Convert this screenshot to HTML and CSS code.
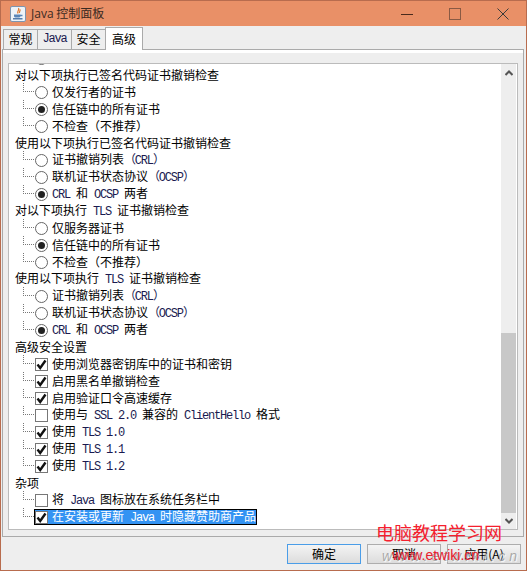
FILE: index.html
```html
<!DOCTYPE html>
<html lang="zh-CN">
<head>
    <meta charset="UTF-8">
    <title>Java 控制面板</title>
    <link rel="stylesheet" href="styles.css">
</head>
<body>
    <svg class="defs" width="0" height="0">
        <symbol id="tick" viewBox="0 0 11 11">
            <path d="M1.5 5.5 L4.2 9 L9.5 1.5" fill="none" stroke="#111" stroke-width="2.4"/>
        </symbol>
    </svg>

    <div class="window">
        <div class="titlebar">
            <svg class="app-icon" width="16" height="16" viewBox="0 0 16 16">
                <rect x="0.5" y="0.5" width="15" height="15" rx="1.5" fill="#eef3f8" stroke="#7d95b0"/>
                <path d="M8.5 2 C10 4 6.5 5 8 7.5 M10 3.5 C10.5 5 9 5.5 9.5 7" fill="none" stroke="#e0762a" stroke-width="1.2"/>
                <path d="M4 8.5 H10.5 V10 C10.5 11 9.5 11.5 8 11.5 H6.5 C5 11.5 4 11 4 10 Z M10.5 8.8 H12.5 V10.2 H10.5" fill="#5a86b8"/>
                <path d="M3 12.8 H12.5" stroke="#2f5f98" stroke-width="1.2"/>
            </svg>
            <span class="title-text"><span class="title-latin">Java</span> 控制面板</span>
            <div class="win-controls">
                <svg width="12" height="12" viewBox="0 0 12 12"><path d="M0 6.5 H12" stroke="#4a2a1c"/></svg>
                <svg width="12" height="12" viewBox="0 0 12 12"><rect x="0.5" y="0.5" width="11" height="11" fill="none" stroke="#8a5a44"/></svg>
                <svg width="12" height="12" viewBox="0 0 12 12"><path d="M0.5 0.5 L11.5 11.5 M11.5 0.5 L0.5 11.5" stroke="#3a3a3a"/></svg>
            </div>
        </div>

        <div class="tabs">
            <div class="tab">常规</div>
            <div class="tab"><span class="lat">Java</span></div>
            <div class="tab">安全</div>
            <div class="tab active">高级</div>
        </div>

        <div class="pane">
            <div class="list-box">
                <div class="tree">
                    <div class="row child"><i class="node"></i><span class="item"><i class="radio"></i>不检查（不推荐）</span></div>

                    <div class="row group">对以下项执行已签名代码证书撤销检查</div>
                    <div class="row child"><i class="node"></i><span class="item"><i class="radio"></i>仅发行者的证书</span></div>
                    <div class="row child"><i class="node"></i><span class="item"><i class="radio on"></i>信任链中的所有证书</span></div>
                    <div class="row child"><i class="node"></i><span class="item"><i class="radio"></i>不检查（不推荐）</span></div>

                    <div class="row group">使用以下项执行已签名代码证书撤销检查</div>
                    <div class="row child"><i class="node"></i><span class="item"><i class="radio"></i><span>证书撤销列表<span class="lat">（CRL）</span></span></span></div>
                    <div class="row child"><i class="node"></i><span class="item"><i class="radio"></i><span>联机证书状态协议<span class="lat">（OCSP）</span></span></span></div>
                    <div class="row child"><i class="node"></i><span class="item"><i class="radio on"></i><span><span class="lat">CRL </span>和<span class="lat"> OCSP </span>两者</span></span></div>

                    <div class="row group"><span>对以下项执行<span class="lat"> TLS </span>证书撤销检查</span></div>
                    <div class="row child"><i class="node"></i><span class="item"><i class="radio"></i>仅服务器证书</span></div>
                    <div class="row child"><i class="node"></i><span class="item"><i class="radio on"></i>信任链中的所有证书</span></div>
                    <div class="row child"><i class="node"></i><span class="item"><i class="radio"></i>不检查（不推荐）</span></div>

                    <div class="row group"><span>使用以下项执行<span class="lat"> TLS </span>证书撤销检查</span></div>
                    <div class="row child"><i class="node"></i><span class="item"><i class="radio"></i><span>证书撤销列表<span class="lat">（CRL）</span></span></span></div>
                    <div class="row child"><i class="node"></i><span class="item"><i class="radio"></i><span>联机证书状态协议<span class="lat">（OCSP）</span></span></span></div>
                    <div class="row child"><i class="node"></i><span class="item"><i class="radio on"></i><span><span class="lat">CRL </span>和<span class="lat"> OCSP </span>两者</span></span></div>

                    <div class="row group">高级安全设置</div>
                    <div class="row child"><i class="node"></i><span class="item"><i class="check"><svg><use href="#tick"/></svg></i>使用浏览器密钥库中的证书和密钥</span></div>
                    <div class="row child"><i class="node"></i><span class="item"><i class="check"><svg><use href="#tick"/></svg></i>启用黑名单撤销检查</span></div>
                    <div class="row child"><i class="node"></i><span class="item"><i class="check"><svg><use href="#tick"/></svg></i>启用验证口令高速缓存</span></div>
                    <div class="row child"><i class="node"></i><span class="item"><i class="check"></i><span>使用与<span class="lat"> SSL 2.0 </span>兼容的<span class="lat"> ClientHello </span>格式</span></span></div>
                    <div class="row child"><i class="node"></i><span class="item"><i class="check"><svg><use href="#tick"/></svg></i><span>使用<span class="lat"> TLS 1.0</span></span></span></div>
                    <div class="row child"><i class="node"></i><span class="item"><i class="check"><svg><use href="#tick"/></svg></i><span>使用<span class="lat"> TLS 1.1</span></span></span></div>
                    <div class="row child"><i class="node"></i><span class="item"><i class="check"><svg><use href="#tick"/></svg></i><span>使用<span class="lat"> TLS 1.2</span></span></span></div>

                    <div class="row group">杂项</div>
                    <div class="row child"><i class="node"></i><span class="item"><i class="check"></i><span>将<span class="lat"> Java </span>图标放在系统任务栏中</span></span></div>
                    <div class="row child"><i class="node"></i><span class="item selected"><i class="check"><svg><use href="#tick"/></svg></i><span>在安装或更新<span class="lat"> Java </span>时隐藏赞助商产品</span></span></div>
                </div>

                <div class="scrollbar">
                    <svg class="arrow" width="8" height="6" viewBox="0 0 8 6"><path d="M0.5 5 L4 1.5 L7.5 5" fill="none" stroke="#555" stroke-width="2"/></svg>
                    <div class="thumb"></div>
                    <svg class="arrow" width="8" height="6" viewBox="0 0 8 6"><path d="M0.5 1 L4 4.5 L7.5 1" fill="none" stroke="#555" stroke-width="2"/></svg>
                </div>
            </div>
        </div>

        <div class="buttons">
            <button class="default">确定</button>
            <button>取消</button>
            <button>应用(A)</button>
        </div>

        <div class="mark-cn">电脑教程学习网</div>
        <div class="mark-shadow">www.etwiki.cn</div>
        <div class="mark-url">www.etwiki.cn</div>
    </div>
</body>
</html>
```

FILE: styles.css
```css
* {
    box-sizing: border-box;
}

body {
    margin: 0;
    font-family: "Noto Sans CJK SC", sans-serif;
    font-size: 12px;
    color: #000;
}

.defs {
    position: absolute;
}

.window {
    position: relative;
    width: 527px;
    height: 571px;
    display: flex;
    flex-direction: column;
    background: #eeeeee;
    border: 1px solid #b86c4e;
    overflow: hidden;
}

.titlebar {
    height: 25px;
    flex: none;
    display: flex;
    align-items: center;
    padding-left: 9px;
    background: #e99067;
}

.title-text {
    margin-left: 5px;
    margin-bottom: 2px;
    font-size: 12px;
    color: #3a2a22;
}

.title-latin {
    font-family: "Open Sans", sans-serif;
    font-size: 12px;
}

.win-controls {
    margin-left: auto;
    margin-right: 17px;
    display: flex;
    gap: 36px;
}

.tabs {
    height: 22px;
    flex: none;
    display: flex;
    align-items: flex-end;
    padding-left: 2px;
    margin-top: 1px;
    position: relative;
    z-index: 1;
}

.tab {
    width: 35px;
    height: 20px;
    display: flex;
    align-items: center;
    justify-content: center;
    background: #eeeeee;
    border: 1px solid #aaaaaa;
    border-bottom: none;
    margin-right: -1px;
    padding-bottom: 2px;
    font-size: 12px;
}

.tab.active {
    width: 38px;
    height: 23px;
    margin-bottom: -1px;
    background: #fff;
}

.pane {
    width: 522px;
    height: 488px;
    margin-left: 1px;
    flex: none;
    background: #eeeeee;
    border: 1px solid #aaaaaa;
    box-shadow: inset 0 3px 0 #fff;
    padding: 13px 5px 6px 5px;
}

.list-box {
    height: 467px;
    display: flex;
    background: #fff;
    border: 1px solid #bbbbbb;
    overflow: hidden;
}

.tree {
    flex: 1;
    min-width: 0;
    margin-top: -15px;
    line-height: 17px;
}

.row {
    height: 17px;
    display: flex;
    align-items: center;
    white-space: pre;
}

.group {
    padding-left: 6px;
}

.child {
    padding-left: 14px;
}

.node {
    width: 11px;
    height: 9px;
    align-self: flex-start;
    flex: none;
    border-left: 1px dotted #777;
    border-bottom: 1px dotted #777;
}

.item {
    display: flex;
    align-items: center;
    gap: 4px;
    padding-left: 1px;
}

.item.selected {
    height: 16px;
    margin-top: 1px;
    padding-left: 0;
    padding-right: 0;
    background: #3393f3;
    border: 1px solid #000;
    color: #fff;
}

.lat {
    font-family: "Liberation Mono", monospace;
    font-size: 12px;
    letter-spacing: -1.2px;
    color: #1a1a50;
}

.selected .lat {
    color: #fff;
}

.radio {
    width: 13px;
    height: 13px;
    margin-top: 2px;
    flex: none;
    display: flex;
    align-items: center;
    justify-content: center;
    background: #fff;
    border: 1px solid #666;
    border-radius: 50%;
}

.radio.on::after {
    content: "";
    width: 7px;
    height: 7px;
    background: #222;
    border-radius: 50%;
}

.check {
    width: 13px;
    height: 13px;
    margin-top: 2px;
    flex: none;
    display: flex;
    background: #fff;
    border: 1px solid #777;
}

.selected .check {
    margin-top: 0;
}

.check svg {
    width: 11px;
    height: 11px;
}

.scrollbar {
    width: 16px;
    flex: none;
    display: flex;
    flex-direction: column;
    align-items: center;
    background: #eeeeee;
    padding-top: 6px;
    border-right: 1px solid #fff;
}

.thumb {
    width: 15px;
    height: 180px;
    margin-top: 257px;
    background: #c8c8c8;
}

.arrow {
    flex: none;
}

.scrollbar .arrow:last-child {
    margin-top: 5px;
}

.buttons {
    display: flex;
    justify-content: flex-end;
    gap: 6px;
    padding: 7px 5px 0 0;
}

button {
    width: 74px;
    height: 20px;
    padding: 0 0 2px;
    font-family: inherit;
    font-size: 12px;
    background: linear-gradient(#f4f4f4, #dcdcdc);
    border: 1px solid #adadad;
}

button.default {
    border-color: #4a9de8;
}

.mark-cn {
    position: absolute;
    left: 375px;
    top: 521px;
    font-size: 18px;
    line-height: 20px;
    color: #f5202e;
    white-space: nowrap;
}

.mark-url {
    position: absolute;
    left: 391px;
    top: 546px;
    font-family: "Liberation Sans", sans-serif;
    font-size: 14px;
    line-height: 16px;
    color: #e8202e;
}

.mark-shadow {
    position: absolute;
    left: 381px;
    top: 547px;
    font-family: "Liberation Sans", sans-serif;
    font-size: 14px;
    line-height: 16px;
    font-style: italic;
    letter-spacing: 4px;
    color: rgba(110, 110, 110, 0.55);
    text-shadow: 1px 1px 1px rgba(255, 255, 255, 0.9);
}
```
